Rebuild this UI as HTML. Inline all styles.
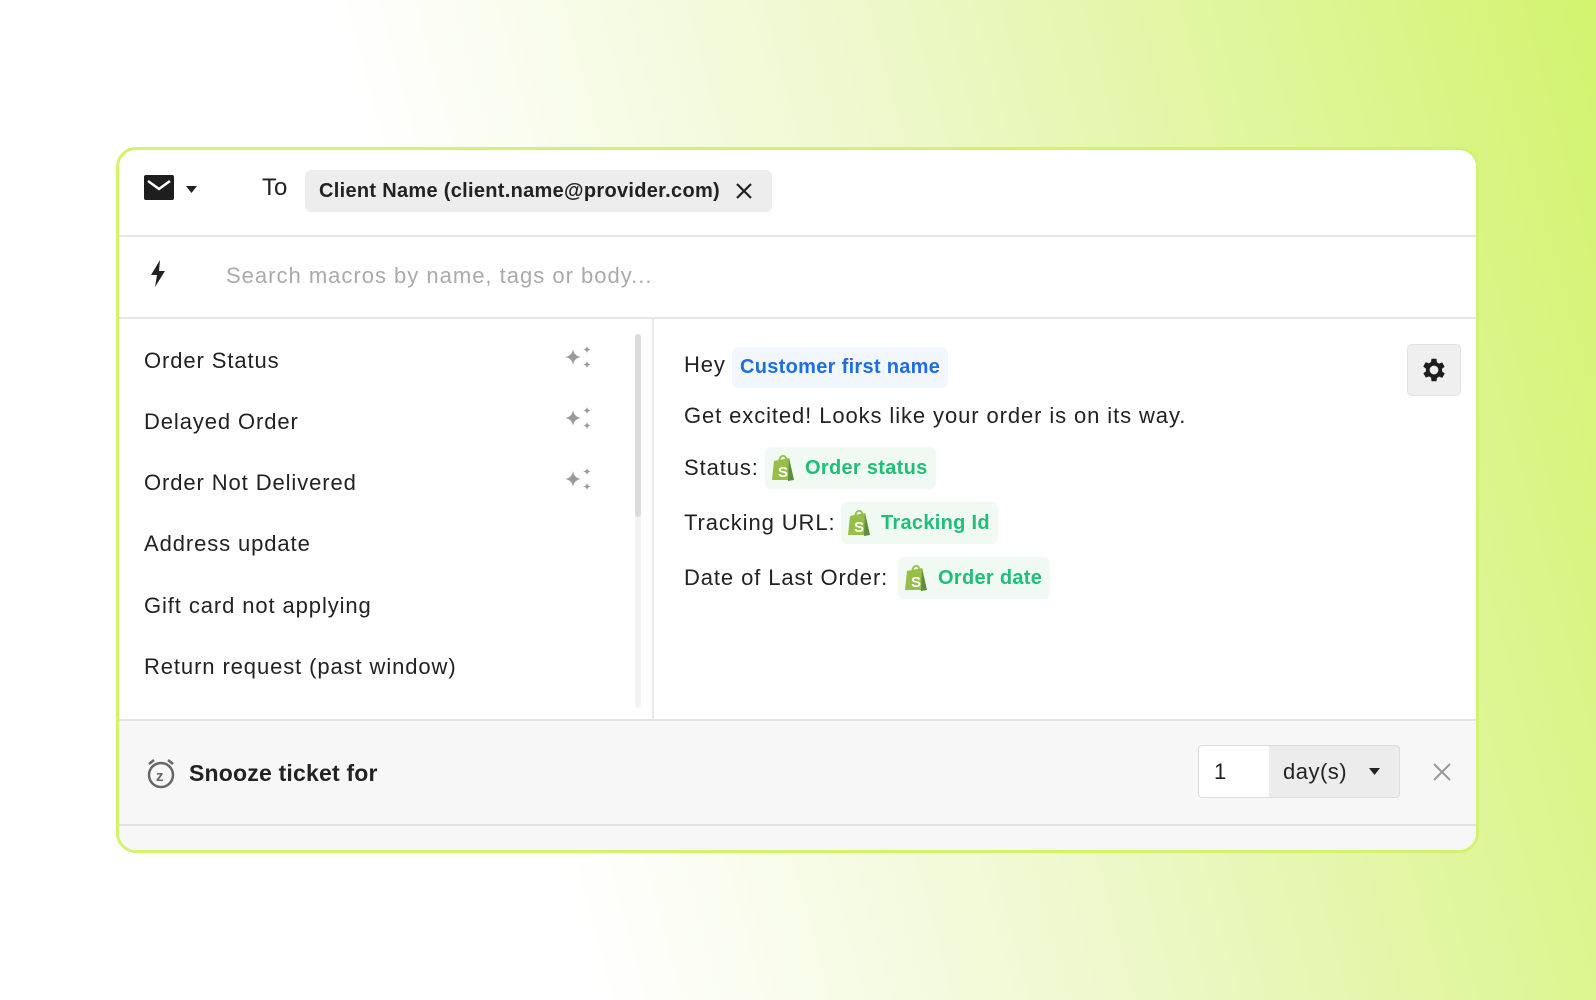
<!DOCTYPE html>
<html><head><meta charset="utf-8"><style>
*{box-sizing:border-box;margin:0;padding:0}
body{width:1596px;height:1000px;overflow:hidden;font-family:"Liberation Sans",sans-serif;color:#222;
background:linear-gradient(75deg,#ffffff 32%,#eef8cc 60%,#d2f46e 100%);position:relative}
.card{position:absolute;left:116px;top:147px;width:1363px;height:706px;background:#fff;border:3px solid #d2f36c;border-radius:20px;overflow:hidden}
.abs{position:absolute}
.hr{position:absolute;left:0;right:0;height:2px;background:#e6e6e6}
.item{position:absolute;left:25px;font-size:22px;color:#222;letter-spacing:0.9px}
.chip{position:absolute;border-radius:6px;font-weight:bold;font-size:20px;display:flex;align-items:center;letter-spacing:0.3px}
.line{position:absolute;left:565px;font-size:22px;color:#222;letter-spacing:0.9px}
.g{background:#f0faf3;color:#1fbf76;padding:0 8px 0 6px;height:42px;gap:8px}
</style></head><body>
<div class="card">
  <svg class="abs" style="left:25px;top:25px" width="30" height="26" viewBox="0 0 30 26"><rect x="0" y="0" width="30" height="25" rx="2" fill="#1e1e1e"/><path d="M4 6 L15 14 L26 6" stroke="#fff" stroke-width="2.5" fill="none"/></svg>
  <svg class="abs" style="left:67px;top:36px" width="11" height="7"><path d="M0 0H11L5.5 7Z" fill="#222"/></svg>
  <div class="abs" style="left:143px;top:24px;font-size:24px">To</div>
  <div class="chip" style="left:186px;top:20px;width:467px;height:42px;background:#ededed;color:#222;padding-left:14px;font-size:20px">Client Name (client.name@provider.com)
    <svg style="position:absolute;right:20px;top:13px" width="16" height="16"><path d="M1 1L15 15M15 1L1 15" stroke="#222" stroke-width="2.2"/></svg></div>
  <div class="hr" style="top:85px"></div>
  <svg class="abs" style="left:31px;top:110px" width="16" height="27" viewBox="0 0 16 27"><path d="M10 0L1 15H7L5 27L15 11H9Z" fill="#222"/></svg>
  <div class="abs" style="left:107px;top:113px;font-size:22px;color:#aaa;letter-spacing:1px">Search macros by name, tags or body...</div>
  <div class="hr" style="top:167px"></div>
  <div class="item" style="top:198px">Order Status</div>
  <div class="item" style="top:259px">Delayed Order</div>
  <div class="item" style="top:320px">Order Not Delivered</div>
  <div class="item" style="top:381px">Address update</div>
  <div class="item" style="top:443px">Gift card not applying</div>
  <div class="item" style="top:504px">Return request (past window)</div>
  <svg class="abs" style="left:444px;top:196px" width="32" height="150" viewBox="0 0 32 150">
   <g fill="#9a9a9a"><g id="s"><path d="M10 3Q11 10 18 11Q11 12 10 19Q9 12 2 11Q9 10 10 3Z"/><path d="M24 0Q24.5 3 28 3.5Q24.5 4 24 7Q23.5 4 20 3.5Q23.5 3 24 0Z"/><path d="M24 15Q24.5 18 28 18.5Q24.5 19 24 22Q23.5 19 20 18.5Q23.5 18 24 15Z"/></g>
   <use href="#s" y="61"/><use href="#s" y="122"/></g></svg>
  <div class="abs" style="left:516px;top:184px;width:6px;height:374px;background:#f3f3f3;border-radius:3px"></div>
  <div class="abs" style="left:516px;top:184px;width:6px;height:183px;background:#dcdcdc;border-radius:3px"></div>
  <div class="abs" style="left:533px;top:169px;width:2px;height:402px;background:#e8e8e8"></div>
  <div class="line" style="top:202px">Hey</div>
  <div class="chip" style="left:613px;top:197px;height:41px;padding:0 8px;background:#f1f6ff;color:#1d6fe0">Customer first name</div>
  <div class="line" style="top:253px">Get excited! Looks like your order is on its way.</div>
  <div class="line" style="top:305px">Status:</div>
  <div class="chip g" style="left:646px;top:297px"><svg width="26" height="28" viewBox="0 0 26 28"><path d="M3 7L18 4L23 26L1 26Z" fill="#95bf47"/><path d="M18 4L23 26L17 27Z" fill="#5e8e3e"/><path d="M8 8Q9 1 13 2Q16 3 15 8" stroke="#95bf47" stroke-width="1.8" fill="none"/><text x="7" y="23" font-size="15" font-weight="bold" fill="#fff" font-family="Liberation Sans">S</text></svg>Order status</div>
  <div class="line" style="top:360px">Tracking URL:</div>
  <div class="chip g" style="left:722px;top:352px"><svg width="26" height="28" viewBox="0 0 26 28"><path d="M3 7L18 4L23 26L1 26Z" fill="#95bf47"/><path d="M18 4L23 26L17 27Z" fill="#5e8e3e"/><path d="M8 8Q9 1 13 2Q16 3 15 8" stroke="#95bf47" stroke-width="1.8" fill="none"/><text x="7" y="23" font-size="15" font-weight="bold" fill="#fff" font-family="Liberation Sans">S</text></svg>Tracking Id</div>
  <div class="line" style="top:415px">Date of Last Order:</div>
  <div class="chip g" style="left:779px;top:407px"><svg width="26" height="28" viewBox="0 0 26 28"><path d="M3 7L18 4L23 26L1 26Z" fill="#95bf47"/><path d="M18 4L23 26L17 27Z" fill="#5e8e3e"/><path d="M8 8Q9 1 13 2Q16 3 15 8" stroke="#95bf47" stroke-width="1.8" fill="none"/><text x="7" y="23" font-size="15" font-weight="bold" fill="#fff" font-family="Liberation Sans">S</text></svg>Order date</div>
  <div class="abs" style="left:1288px;top:194px;width:54px;height:52px;background:#efefef;border:1px solid #e2e2e2;border-radius:5px"></div>
  <svg class="abs" style="left:1300px;top:205px" width="30" height="30" viewBox="0 0 24 24"><path fill="#1e1e1e" d="M19.4 13a7.5 7.5 0 0 0 0-2l2.1-1.6-2-3.5-2.5 1a7 7 0 0 0-1.7-1L15 3h-4l-.4 2.7a7 7 0 0 0-1.7 1l-2.5-1-2 3.5L6.6 11a7.5 7.5 0 0 0 0 2l-2.1 1.6 2 3.5 2.5-1a7 7 0 0 0 1.7 1L11 21h4l.4-2.7a7 7 0 0 0 1.7-1l2.5 1 2-3.5zM13 15.5a3.5 3.5 0 1 1 0-7 3.5 3.5 0 0 1 0 7z" transform="translate(-1 0)"/></svg>
  <div class="abs" style="left:0;right:0;top:570px;bottom:0;background:#f7f7f7"></div>
  <div class="hr" style="top:569px;background:#e4e4e4"></div>
  <svg class="abs" style="left:27px;top:608px" width="30" height="32" viewBox="0 0 30 32"><circle cx="15" cy="17" r="12" stroke="#666" stroke-width="2.5" fill="none"/><path d="M3 6L8 2M27 6L22 2" stroke="#666" stroke-width="2.5"/><text x="10" y="23" font-size="15" font-weight="bold" fill="#666" font-family="Liberation Sans">z</text></svg>
  <div class="abs" style="left:70px;top:610px;font-size:23px;font-weight:bold;color:#222;letter-spacing:0.2px">Snooze ticket for</div>
  <div class="abs" style="left:1079px;top:595px;width:202px;height:53px;border:1px solid #ddd;border-radius:4px;background:#ececec;overflow:hidden">
    <div class="abs" style="left:0;top:0;width:70px;height:53px;background:#fff"></div>
    <div class="abs" style="left:15px;top:13px;font-size:22px">1</div>
    <div class="abs" style="left:84px;top:13px;font-size:22px;letter-spacing:0.5px">day(s)</div>
    <svg class="abs" style="left:170px;top:22px" width="11" height="7"><path d="M0 0H11L5.5 7Z" fill="#222"/></svg>
  </div>
  <svg class="abs" style="left:1314px;top:613px" width="18" height="18"><path d="M1 1L17 17M17 1L1 17" stroke="#999" stroke-width="2"/></svg>
  <div class="hr" style="top:674px;background:#e2e2e2"></div>
</div>
</body></html>
